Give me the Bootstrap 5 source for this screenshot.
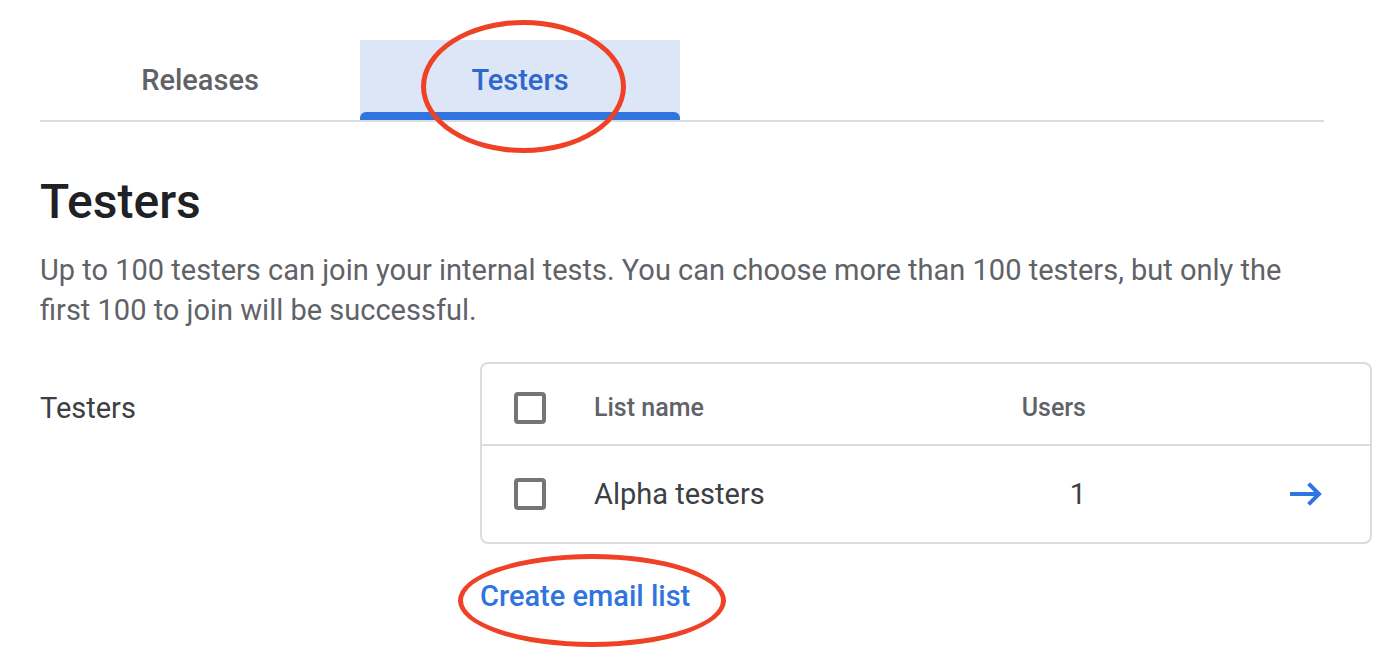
<!DOCTYPE html>
<html lang="en">
<head>
<meta charset="utf-8">
<meta name="viewport" content="width=device-width, initial-scale=1">
<title>Internal testing – Testers</title>
<link href="https://cdn.jsdelivr.net/npm/bootstrap@5.3.0/dist/css/bootstrap.min.css" rel="stylesheet">
<style>
  :root {
    --line: #dadce0;
    --blue: #3074e0;
    --ink: #3c4043;
    --muted: #5f6368;
    --ring: #ee4126;
  }
  body { font-family: Roboto, "Liberation Sans", sans-serif; font-size: 29px; line-height: 40px; color: var(--ink); background: #fff; }
  .page { padding: 40px 5px 24px 40px; }
  .page-head { margin-right: 48px; }
  .tab-bar { border-bottom: 2px solid var(--line); }
  .tab-bar .tab-btn { width: 320px; height: 80px; padding: 0; border: 0; background: none; color: var(--muted); font-weight: 500; position: relative; }
  .tab-bar .tab-btn.active { background: #dde6f7; color: #2f68cd; }
  .tab-bar .tab-btn.active::after { content: ""; position: absolute; left: 0; right: 0; bottom: 0; height: 8px; border-radius: 6px 6px 0 0; background: var(--blue); }
  .ring { position: absolute; z-index: 2; border: 5px solid var(--ring); border-radius: 50%; pointer-events: none; }
  .ring-tab { left: 61px; top: -20px; width: 205px; height: 133px; }
  .ring-link { left: -22px; top: -22px; width: 268px; height: 93px; }
  .page-title { font-size: 48px; line-height: 56px; font-weight: 500; color: #202124; margin: 52px 0 20px; }
  .intro { color: var(--muted); margin: 0 0 32px; }
  .side-label { width: 440px; padding-top: 26px; }
  .list-box { border: 2px solid var(--line); border-radius: 8px; }
  .list-table { table-layout: fixed; color: var(--ink); }
  .list-table th, .list-table td { padding: 0; vertical-align: middle; }
  .list-table thead th { height: 81px; padding-top: 8px; font-size: 25px; font-weight: 500; color: var(--muted); }
  .list-table thead tr { border-bottom: 2px solid var(--line); }
  .list-table tbody td { height: 97px; }
  .list-table .pick { padding-left: 32px; }
  .box-check { appearance: none; display: block; width: 32px; height: 32px; margin: 0; border: 4px solid #757575; border-radius: 4px; background: #fff; }
  .box-check:checked { background: var(--blue); border-color: var(--blue); }
  .open-link { display: flex; justify-content: flex-end; }
  .create-row { margin-top: 32px; }
  .create-link { color: var(--blue); font-weight: 500; text-decoration: none; }
</style>
</head>
<body>
<main class="page min-vh-100">
  <div class="page-head">
    <div class="tab-bar d-flex" role="tablist">
      <button type="button" class="tab-btn" role="tab" aria-selected="false">Releases</button>
      <div class="position-relative">
        <button type="button" class="tab-btn active" role="tab" aria-selected="true">Testers</button>
        <span class="ring ring-tab"></span>
      </div>
    </div>
    <h1 class="page-title">Testers</h1>
    <p class="intro">Up to 100 testers can join your internal tests. You can choose more than 100 testers, but only the first 100 to join will be successful.</p>
  </div>
  <section class="d-flex">
    <div class="side-label flex-shrink-0">Testers</div>
    <div class="flex-grow-1">
      <div class="list-box">
        <table class="list-table w-100">
          <colgroup><col style="width:112px"><col><col style="width:168px"><col style="width:284px"></colgroup>
          <thead>
            <tr>
              <th class="pick"><input type="checkbox" class="box-check" aria-label="Select all lists"></th>
              <th>List name</th>
              <th class="text-end">Users</th>
              <th></th>
            </tr>
          </thead>
          <tbody>
            <tr>
              <td class="pick"><input type="checkbox" class="box-check" id="alpha"></td>
              <td><label for="alpha">Alpha testers</label></td>
              <td class="text-end">1</td>
              <td class="pe-5"><a href="#" class="open-link" aria-label="Open Alpha testers"><svg width="32" height="24" viewBox="0 0 32 24" fill="none" stroke="#3074e0" stroke-width="4"><path d="M0 12H29M18.600 1.600L29 12L18.600 22.400"/></svg></a></td>
            </tr>
          </tbody>
        </table>
      </div>
      <div class="create-row d-flex">
        <div class="position-relative">
          <a href="#" class="create-link">Create email list</a>
          <span class="ring ring-link"></span>
        </div>
      </div>
    </div>
  </section>
</main>
<script src="https://cdn.jsdelivr.net/npm/bootstrap@5.3.0/dist/js/bootstrap.bundle.min.js"></script>
</body>
</html>
